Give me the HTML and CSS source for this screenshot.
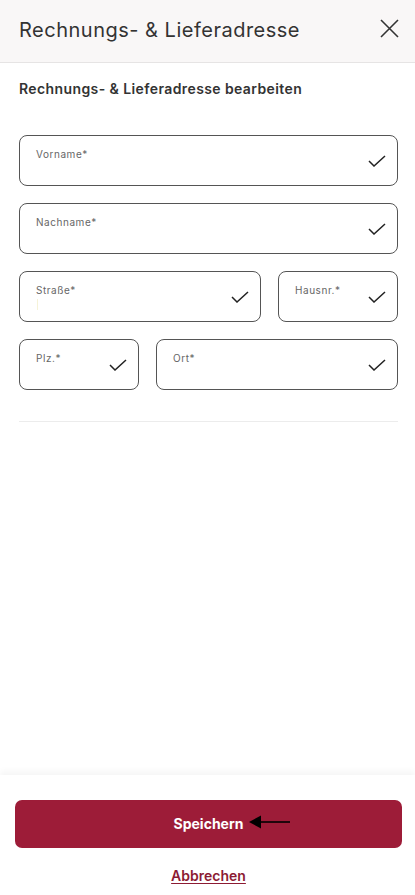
FILE: index.html
```html
<!DOCTYPE html>
<html lang="de">
<head>
<meta charset="utf-8">
<link rel="stylesheet" href="styles.css">
</head>
<body>
<div class="page">
  <header class="header">
    <h1 class="title">Rechnungs- &amp; Lieferadresse</h1>
    <button class="close" aria-label="Schließen">
      <svg width="19" height="19" viewBox="0 0 19 19"><path d="M1 1L18 18M18 1L1 18" stroke="#333" stroke-width="1.6" fill="none"/></svg>
    </button>
  </header>
  <main class="content">
    <h2 class="subtitle">Rechnungs- &amp; Lieferadresse bearbeiten</h2>
    <form class="form">
      <div class="row">
        <div class="field"><span class="label">Vorname*</span><svg class="check" viewBox="0 0 18 12" width="18" height="12"><path d="M1 6L6 11L17 1" stroke="#222" stroke-width="1.5" fill="none"/></svg></div>
      </div>
      <div class="row">
        <div class="field"><span class="label">Nachname*</span><svg class="check" viewBox="0 0 18 12" width="18" height="12"><path d="M1 6L6 11L17 1" stroke="#222" stroke-width="1.5" fill="none"/></svg></div>
      </div>
      <div class="row">
        <div class="field street"><span class="label">Straße*</span><span class="caret"></span><svg class="check" viewBox="0 0 18 12" width="18" height="12"><path d="M1 6L6 11L17 1" stroke="#222" stroke-width="1.5" fill="none"/></svg></div>
        <div class="field house"><span class="label">Hausnr.*</span><svg class="check" viewBox="0 0 18 12" width="18" height="12"><path d="M1 6L6 11L17 1" stroke="#222" stroke-width="1.5" fill="none"/></svg></div>
      </div>
      <div class="row">
        <div class="field zip"><span class="label">Plz.*</span><svg class="check" viewBox="0 0 18 12" width="18" height="12"><path d="M1 6L6 11L17 1" stroke="#222" stroke-width="1.5" fill="none"/></svg></div>
        <div class="field city"><span class="label">Ort*</span><svg class="check" viewBox="0 0 18 12" width="18" height="12"><path d="M1 6L6 11L17 1" stroke="#222" stroke-width="1.5" fill="none"/></svg></div>
      </div>
    </form>
    <hr class="divider">
  </main>
  <footer class="footer">
    <button class="save"><span class="save-text">Speichern</span><svg class="arrow" width="42" height="14" viewBox="0 0 42 14"><path d="M0 7L12 0.5V13.5Z" fill="#000"/><path d="M10 7H41" stroke="#000" stroke-width="1.6"/></svg></button>
    <a class="cancel" href="#">Abbrechen</a>
  </footer>
</div>
</body>
</html>
```
FILE: styles.css
```css
* { box-sizing: border-box; }
html, body { margin: 0; padding: 0; }
body {
  font-family: Inter, "Open Sans", sans-serif;
  color: #333;
  background: #fff;
}
.page {
  width: 415px;
  height: 895px;
  display: flex;
  flex-direction: column;
}
.header {
  height: 63px;
  background: #f9f7f7;
  border-bottom: 1px solid #e6e4e4;
  display: flex;
  align-items: center;
  justify-content: space-between;
  padding: 0 16px 0 19px;
  flex-shrink: 0;
}
.title {
  margin: 0;
  font-size: 20px;
  font-weight: 400;
  color: #333;
  letter-spacing: 0.5px;
  padding-bottom: 2px;
}
.close {
  border: 0;
  background: none;
  padding: 0;
  width: 19px;
  height: 19px;
  display: flex;
  margin-top: -6px;
}
.content {
  flex: 1;
  padding: 0 17px 0 19px;
}
.subtitle {
  margin: 16px 0 0;
  font-size: 14px;
  font-weight: 600;
  color: #333;
  line-height: 20px;
  letter-spacing: 0.4px;
}
.form {
  margin-top: 36px;
  display: flex;
  flex-direction: column;
  gap: 17px;
}
.row {
  display: flex;
  gap: 17px;
}
.field {
  flex: 1;
  height: 51px;
  border: 1px solid #555;
  border-radius: 8px;
  position: relative;
  padding: 11px 16px 0;
}
.street { flex: 0 0 242px; }
.house { flex: 1; }
.zip { flex: 0 0 120px; }
.city { flex: 1; }
.label {
  font-size: 10px;
  font-weight: 400;
  color: #666;
  line-height: 14px;
  display: block;
  letter-spacing: 0.55px;
}
.caret {
  position: absolute;
  left: 17px;
  top: 27px;
  width: 1px;
  height: 11px;
  background: #f6f3d8;
}
.check {
  position: absolute;
  right: 11px;
  top: 19px;
}
.divider {
  margin: 31px 0 0;
  border: 0;
  border-top: 1px solid #ececec;
}
.footer {
  flex-shrink: 0;
  height: 120px;
  box-shadow: 0 -4px 6px rgba(0,0,0,0.04);
  display: flex;
  flex-direction: column;
  align-items: center;
  padding: 25px 13px 0 15px;
}
.save {
  width: 387px;
  height: 48px;
  border: 0;
  border-radius: 7px;
  background: #9d1c38;
  color: #fff;
  font-family: inherit;
  font-size: 14px;
  font-weight: 700;
  display: flex;
  align-items: center;
  justify-content: center;
  position: relative;
  padding-bottom: 2px;
}
.arrow {
  position: absolute;
  left: 234px;
  top: 15px;
}
.cancel {
  margin-top: 19px;
  font-size: 14px;
  font-weight: 600;
  color: #8c1b33;
  text-decoration: underline;
  text-underline-offset: 2px;
}
```
